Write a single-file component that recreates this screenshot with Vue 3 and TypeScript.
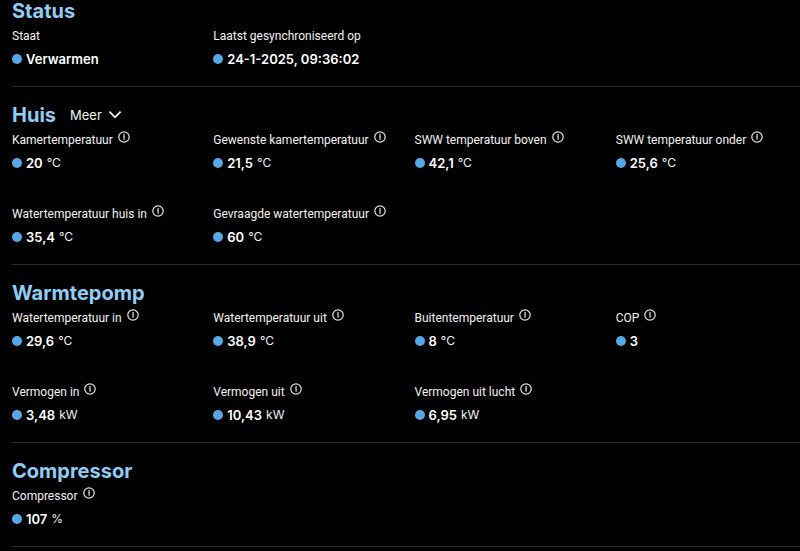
<script setup lang="ts">
interface Reading {
  label: string
  value: string
  unit?: string
  info?: boolean
}

interface Section {
  title: string
  expandable?: boolean
  readings: Reading[]
}

const sections: Section[] = [
  {
    title: 'Status',
    readings: [
      { label: 'Staat', value: 'Verwarmen' },
      { label: 'Laatst gesynchroniseerd op', value: '24-1-2025, 09:36:02' },
    ],
  },
  {
    title: 'Huis',
    expandable: true,
    readings: [
      { label: 'Kamertemperatuur', value: '20', unit: '°C', info: true },
      { label: 'Gewenste kamertemperatuur', value: '21,5', unit: '°C', info: true },
      { label: 'SWW temperatuur boven', value: '42,1', unit: '°C', info: true },
      { label: 'SWW temperatuur onder', value: '25,6', unit: '°C', info: true },
      { label: 'Watertemperatuur huis in', value: '35,4', unit: '°C', info: true },
      { label: 'Gevraagde watertemperatuur', value: '60', unit: '°C', info: true },
    ],
  },
  {
    title: 'Warmtepomp',
    readings: [
      { label: 'Watertemperatuur in', value: '29,6', unit: '°C', info: true },
      { label: 'Watertemperatuur uit', value: '38,9', unit: '°C', info: true },
      { label: 'Buitentemperatuur', value: '8', unit: '°C', info: true },
      { label: 'COP', value: '3', info: true },
      { label: 'Vermogen in', value: '3,48', unit: 'kW', info: true },
      { label: 'Vermogen uit', value: '10,43', unit: 'kW', info: true },
      { label: 'Vermogen uit lucht', value: '6,95', unit: 'kW', info: true },
    ],
  },
  {
    title: 'Compressor',
    readings: [{ label: 'Compressor', value: '107', unit: '%', info: true }],
  },
]
</script>

<template>
  <main class="dashboard">
    <section v-for="section in sections" :key="section.title" class="section">
      <header class="section-header">
        <h2 class="title">{{ section.title }}</h2>
        <button v-if="section.expandable" type="button" class="more">
          <span>Meer</span>
          <svg class="chevron" viewBox="0 0 14 14" aria-hidden="true">
            <path d="M1.4 3.7 7 9.3l5.6-5.6" />
          </svg>
        </button>
      </header>
      <dl class="readings">
        <div v-for="reading in section.readings" :key="reading.label" class="reading">
          <dt class="label">
            <span>{{ reading.label }}</span>
            <button v-if="reading.info" type="button" class="info" aria-label="Info">
              <svg viewBox="0 0 12 12" aria-hidden="true">
                <circle cx="6" cy="6" r="5.2" />
                <path d="M5.2 5.2h.9v3.6M6.1 3.1v1.2" />
              </svg>
            </button>
          </dt>
          <dd class="value">
            <span class="dot"></span>
            <strong class="amount">{{ reading.value }}</strong>
            <span v-if="reading.unit" class="unit">{{ reading.unit }}</span>
          </dd>
        </div>
      </dl>
    </section>
  </main>
</template>

<style>
body {
  background: #000;
}
</style>

<style scoped>
.dashboard {
  padding-left: 12px;
  color: #f2f2f2;
  font-family: Inter, "Liberation Sans", sans-serif;
  font-size: 12px;
}

.section {
  padding: 17px 0 16px;
  border-bottom: 1px solid #2b2b2b;
}

.section:first-child {
  padding-top: 0;
}

.section-header {
  display: flex;
  align-items: flex-start;
  gap: 14px;
  height: 24px;
}

.title {
  margin: 0;
  color: #8fcdf5;
  font-size: 20px;
  font-weight: 700;
  line-height: 22px;
}

button {
  padding: 0;
  border: 0;
  background: none;
  color: inherit;
  font: inherit;
  cursor: pointer;
}

.more {
  display: flex;
  align-items: center;
  gap: 6px;
  font-size: 13px;
  line-height: 22px;
}

.chevron {
  width: 14px;
  height: 14px;
  fill: none;
  stroke: #fff;
  stroke-width: 1.8;
}

.readings {
  display: grid;
  grid-template-columns: repeat(4, minmax(0, 1fr));
  gap: 28px 17px;
  margin: 0;
}

.label {
  display: flex;
  gap: 5px;
  font-family: Roboto, "Liberation Sans", sans-serif;
  font-size: 12px;
  line-height: 24px;
  white-space: nowrap;
}

.info {
  display: flex;
  align-items: flex-start;
  padding-top: 3px;
}

.info svg {
  width: 12px;
  height: 12px;
  fill: none;
  stroke: #e4e4e4;
  stroke-width: 1.2;
}

.value {
  display: flex;
  align-items: center;
  gap: 4px;
  margin: 0;
  line-height: 22px;
  white-space: nowrap;
}

.dot {
  width: 10px;
  height: 10px;
  border-radius: 50%;
  background: #56a8e4;
}

.amount {
  color: #fff;
  font-size: 13px;
  font-weight: 600;
}
</style>
